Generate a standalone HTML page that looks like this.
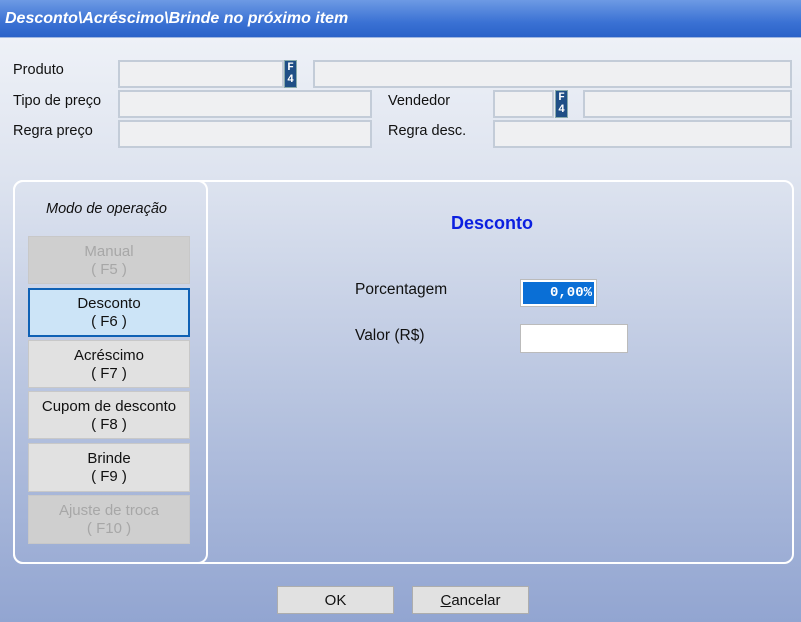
<!DOCTYPE html>
<html><head><meta charset="utf-8"><style>
*{margin:0;padding:0;box-sizing:border-box}
body{width:801px;height:622px;overflow:hidden;font-family:"Liberation Sans",sans-serif;font-size:14.5px;color:#111;position:relative;background:linear-gradient(#eef1f7 38px,#dde3ef 180px,#b4c1de 420px,#92a5d1 622px)}
.t{position:absolute;left:0;top:0;width:801px;height:38px;background:linear-gradient(#6d9ae4,#3b72d4 60%,#2a62c8);color:#fff;font-weight:bold;font-style:italic;font-size:16px;padding:10px 0 0 5px;border-bottom:1px solid #9fb6e0}
.a{position:absolute}
.in{position:absolute;background:#eff0f2;border:2px solid #c3ccd8}
.f4{position:absolute;width:13px;height:28px;background:#1f4f86;border:1px solid #8aa;color:#fff;font-family:"Liberation Mono",monospace;font-weight:bold;font-size:11px;line-height:12px;text-align:center;padding-top:1px}
.b{position:absolute;left:28px;width:162px;background:#e1e1e1;border:1px solid #c8c8c8;text-align:center;font-size:15px;line-height:18px;padding-top:6px}
.d{background:#cfcfcf;color:#a7a7a7}
.btn{position:absolute;top:586px;height:28px;background:#e1e1e1;border:1px solid #adadad;text-align:center;font-size:15px;line-height:28px}
</style></head><body>
<div class="t">Desconto\Acréscimo\Brinde no próximo item</div>
<div class="a" style="left:13px;top:62px">Produto</div>
<div class="in" style="left:118px;top:60px;width:166px;height:28px"></div>
<div class="f4" style="left:284px;top:60px">F<br>4</div>
<div class="in" style="left:313px;top:60px;width:479px;height:28px"></div>
<div class="a" style="left:13px;top:93px">Tipo de preço</div>
<div class="in" style="left:118px;top:90px;width:254px;height:28px"></div>
<div class="a" style="left:388px;top:93px">Vendedor</div>
<div class="in" style="left:493px;top:90px;width:61px;height:28px"></div>
<div class="f4" style="left:555px;top:90px">F<br>4</div>
<div class="in" style="left:583px;top:90px;width:209px;height:28px"></div>
<div class="a" style="left:13px;top:123px">Regra preço</div>
<div class="in" style="left:118px;top:120px;width:254px;height:28px"></div>
<div class="a" style="left:388px;top:123px">Regra desc.</div>
<div class="in" style="left:493px;top:120px;width:299px;height:28px"></div>

<div class="a" style="left:13px;top:180px;width:781px;height:384px;border:2px solid #fff;border-radius:10px"></div>
<div class="a" style="left:13px;top:180px;width:195px;height:384px;border:2px solid #fff;border-radius:10px"></div>
<div class="a" style="left:0;top:201px;width:213px;text-align:center;font-style:italic;font-size:14.5px">Modo de operação</div>
<div class="b d" style="top:236px;height:48px">Manual<br>( F5 )</div>
<div class="b" style="top:288px;height:49px;background:#cce4f7;border:2px solid #0f61b5;padding-top:5px">Desconto<br>( F6 )</div>
<div class="b" style="top:340px;height:48px">Acréscimo<br>( F7 )</div>
<div class="b" style="top:391px;height:48px">Cupom de desconto<br>( F8 )</div>
<div class="b" style="top:443px;height:49px">Brinde<br>( F9 )</div>
<div class="b d" style="top:495px;height:49px">Ajuste de troca<br>( F10 )</div>

<div class="a" style="left:451px;top:213px;color:#0b1fe0;font-weight:bold;font-size:18px">Desconto</div>
<div class="a" style="left:355px;top:281px;font-size:15.5px">Porcentagem</div>
<div class="a" style="left:520px;top:279px;width:77px;height:28px;border:1px solid #bbb;background:#fff;padding:2px"><div style="background:#0a6fd6;color:#fff;font-family:'Liberation Mono',monospace;font-weight:bold;font-size:14px;text-align:right;height:22px;line-height:22px;padding-right:2px">0,00%</div></div>
<div class="a" style="left:355px;top:327px;font-size:15.5px">Valor (R$)</div>
<div class="a" style="left:520px;top:324px;width:108px;height:29px;border:1px solid #bbb;background:#fff"></div>

<div class="btn" style="left:277px;width:117px">OK</div>
<div class="btn" style="left:412px;width:117px"><u>C</u>ancelar</div>
</body></html>
